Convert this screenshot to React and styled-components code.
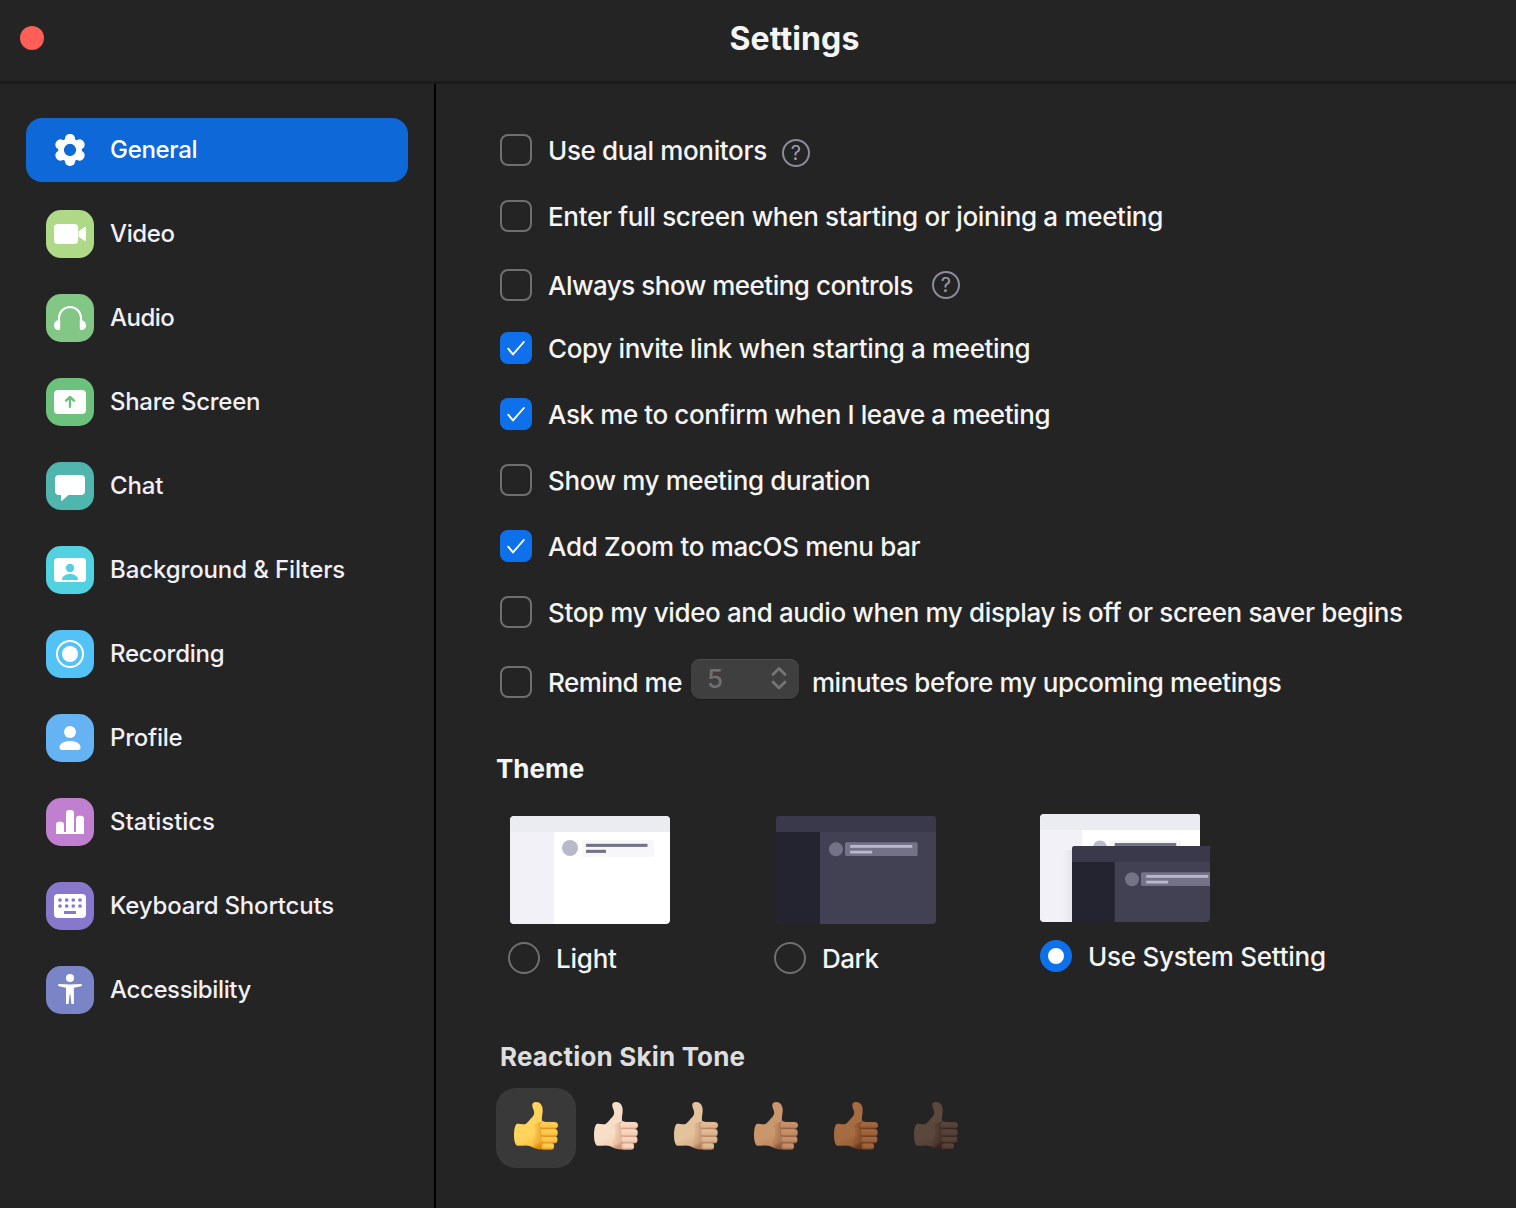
import React from "react";
import styled, { createGlobalStyle } from "styled-components";

const GlobalStyle = createGlobalStyle`
  * { box-sizing: border-box; }
  body {
    margin: 0;
    background: #242424;
    color: #f5f5f5;
    font-family: Inter, "Liberation Sans", sans-serif;
  }
`;

const Window = styled.div`
  display: flex;
  flex-direction: column;
  width: 1516px;
  height: 1208px;
  overflow: hidden;
  background: #242424;
`;

const TitleBar = styled.header`
  display: grid;
  grid-template-columns: 72px 1fr;
  align-items: center;
  flex: none;
  height: 84px;
  padding: 0 0 5px 20px;
  border-bottom: 3px solid #1b1b1b;
`;

const CloseButton = styled.button`
  width: 24px;
  height: 24px;
  padding: 0;
  border: 0;
  border-radius: 50%;
  background: #ff5f57;
`;

const Title = styled.h1`
  margin: 0 0 0 -19px;
  padding: 2px 0 0;
  text-align: center;
  font-size: 32px;
  line-height: 40px;
  font-weight: 700;
  letter-spacing: 0.1px;
`;

const Body = styled.div`
  display: flex;
  flex: 1;
  min-height: 0;
`;

const Sidebar = styled.nav`
  display: flex;
  flex-direction: column;
  gap: 20px;
  width: 436px;
  padding: 34px 26px;
  border-right: 2px solid #000;
`;

const NavItem = styled.a`
  display: flex;
  align-items: center;
  gap: 16px;
  height: 64px;
  padding-left: 20px;
  border-radius: 16px;
  background: ${(p) => (p.$active ? "#0e68d8" : "transparent")};
  color: ${(p) => (p.$active ? "#fff" : "#f2f0f7")};
`;

const NavIcon = styled.svg`
  width: 48px;
  height: 48px;
  border-radius: 15px;
  background: ${(p) => p.$color};
`;

const NavLabel = styled.span`
  font-size: 24px;
  line-height: 30px;
  font-weight: 500;
  white-space: nowrap;
  letter-spacing: ${(p) => p.$track || 0}px;
`;

const Content = styled.main`
  flex: 1;
  padding: 50px 0 0 60px;
`;

const OptionRow = styled.label`
  display: flex;
  align-items: center;
  height: 32px;
  margin: ${(p) => p.$gap || 0}px 0 0 4px;
`;

const Box = styled.span`
  display: flex;
  align-items: center;
  justify-content: center;
  flex: none;
  width: 32px;
  height: 32px;
  margin-right: 16px;
  border: ${(p) => (p.$checked ? "0" : "2px solid #6f6f6f")};
  border-radius: 8px;
  background: ${(p) => (p.$checked ? "#0e71eb" : "transparent")};
`;

const Label = styled.span`
  padding-top: ${(p) => p.$drop ?? 1}px;
  font-size: 26px;
  line-height: 32px;
  font-weight: 500;
  white-space: nowrap;
  letter-spacing: ${(p) => p.$track || 0}px;
`;

const Help = styled.span`
  display: flex;
  align-items: center;
  justify-content: center;
  width: 28px;
  height: 28px;
  margin: ${(p) => p.$drop || 0}px 0 0 ${(p) => p.$space}px;
  border: 2px solid #8d8b9b;
  border-radius: 50%;
  color: #9e9cae;
  font-size: 20px;
  line-height: 24px;
`;

const MinuteSelect = styled.span`
  display: flex;
  align-items: center;
  justify-content: space-between;
  width: 108px;
  height: 40px;
  margin: 0 13px 6px 9px;
  padding: 0 11px 2px 16px;
  border-radius: 9px;
  background: #3f3f3f;
  box-shadow: inset 0 1px 0 #4d4d4d, 0 1px 1px rgba(0, 0, 0, 0.25);
  color: #6f6f6f;
  font-size: 26px;
  font-weight: 500;
`;

const SectionTitle = styled.h2`
  margin: ${(p) => p.$top}px 0 0 ${(p) => p.$left}px;
  font-size: 26px;
  line-height: 32px;
  font-weight: 700;
  color: ${(p) => p.$color};
  letter-spacing: ${(p) => p.$track || 0}px;
`;

const ThemeGrid = styled.div`
  display: grid;
  grid-template-columns: 266px 266px 1fr;
  height: 160px;
  margin: 29px 0 0 12px;
`;

const ThemeOption = styled.label`
  display: flex;
  flex-direction: column;
  gap: 18px;
  padding-top: ${(p) => (p.$raised ? 0 : 2)}px;
`;

const Preview = styled.svg`
  display: block;
  margin-left: ${(p) => p.$inset}px;
  border-radius: 4px;
`;

const RadioRow = styled.span`
  display: flex;
  align-items: center;
  gap: 16px;
  height: 32px;
`;

const Radio = styled.span`
  width: 32px;
  height: 32px;
  border-radius: 50%;
  border: ${(p) => (p.$checked ? "8px solid #0e71eb" : "2px solid #6f6f6f")};
  background: ${(p) => (p.$checked ? "#fff" : "transparent")};
`;

const ToneRow = styled.div`
  display: flex;
  margin-top: 15px;
`;

const Tone = styled.button`
  width: 80px;
  height: 80px;
  padding: 0;
  border: 0;
  border-radius: 20px;
  background: ${(p) => (p.$selected ? "#393939" : "transparent")};
`;

const ThumbSvg = styled.svg`
  display: block;
  width: 80px;
  height: 80px;
`;

const nav = [
  {
    label: "General", color: "transparent", track: -0.3,
    art: (
      <>
        <circle cx="24" cy="24" r="9" fill="none" stroke="#fff" strokeWidth="5.7" />
        {[0, 60, 120, 180, 240, 300].map((a) => (
          <rect key={a} x="18.9" y="8" width="10.2" height="9.6" rx="4.7" fill="#fff" transform={`rotate(${a} 24 24)`} />
        ))}
      </>
    ),
  },
  {
    label: "Video", color: "#aed987", track: -0.36,
    art: (
      <>
        <rect x="8" y="14" width="24.2" height="20" rx="4" />
        <path d="M32.6 21.2 38.5 17.2Q40 16.4 40 18V30Q40 31.6 38.5 30.8L32.6 26.8Z" />
      </>
    ),
  },
  {
    label: "Audio", color: "#82c786", track: -0.5,
    art: (
      <>
        <path d="M13 35V24a11 11 0 0 1 22 0V35" fill="none" stroke="#fff" strokeWidth="2" />
        <path d="M14.2 25.4C10.3 25.8 8 28.3 8 31.2 8 34 9.6 36 12.4 36 13.6 36 14.2 35.4 14.2 34.4ZM33.8 25.4C37.7 25.8 40 28.3 40 31.2 40 34 38.4 36 35.6 36 34.4 36 33.8 35.4 33.8 34.4Z" />
      </>
    ),
  },
  {
    label: "Share Screen", color: "#6cc17c", track: -0.3,
    art: (
      <>
        <rect x="8" y="12" width="32" height="24" rx="4" />
        <path d="M20 22.7 24 19 28 22.7M24 19.4V28.8" fill="none" stroke="#6cc17c" strokeWidth="2.4" strokeLinecap="round" strokeLinejoin="round" />
      </>
    ),
  },
  {
    label: "Chat", color: "#50b5ad", track: -0.16,
    art: <path d="M13 13H35A4 4 0 0 1 39 17V29A4 4 0 0 1 35 33H22.5L16 38.8Q15 39.4 15 38.3V33H13A4 4 0 0 1 9 29V17A4 4 0 0 1 13 13Z" />,
  },
  {
    label: "Background & Filters", color: "#52d1e0", track: -0.11,
    art: (
      <>
        <rect x="8" y="12" width="32" height="24" rx="3.5" />
        <g fill="#52d1e0">
          <circle cx="24" cy="22" r="4.2" />
          <path d="M16 34C16 30.4 19.2 28 24 28S32 30.4 32 34Z" />
        </g>
      </>
    ),
  },
  {
    label: "Recording", color: "#53c2f7", track: -0.27,
    art: (
      <>
        <circle cx="24" cy="24" r="13" fill="none" stroke="#fff" strokeWidth="2" />
        <circle cx="24" cy="24" r="8" />
      </>
    ),
  },
  {
    label: "Profile", color: "#66b3f4", track: -0.23,
    art: (
      <>
        <circle cx="24" cy="18" r="6" />
        <path d="M13.5 33C14 29.2 18 26.9 24 26.9S34 29.2 34.5 33C34.7 34.9 33.6 36 32 36H16C14.4 36 13.3 34.9 13.5 33Z" />
      </>
    ),
  },
  {
    label: "Statistics", color: "#c180cf", track: -0.06,
    art: <path d="M10 36V27A3.200 3.200 0 0 1 13.2 23.8H14.8A3.200 3.200 0 0 1 18 27V34H20V15.2A3.200 3.200 0 0 1 23.2 12H24.8A3.200 3.200 0 0 1 28 15.2V34H30V21A3.200 3.200 0 0 1 33.2 17.8H34.8A3.200 3.200 0 0 1 38 21V36Z" />,
  },
  {
    label: "Keyboard Shortcuts", color: "#8878cc", track: -0.2,
    art: (
      <>
        <rect x="8" y="12" width="32" height="24" rx="4" />
        <g fill="#8878cc">
          {[18, 24].map((y) => [14, 20.7, 27.3, 34].map((x) => <circle key={`${x}-${y}`} cx={x} cy={y} r="1.85" />))}
          <rect x="18" y="29" width="12" height="3" />
        </g>
      </>
    ),
  },
  {
    label: "Accessibility", color: "#7a85c8", track: -0.38,
    art: (
      <>
        <circle cx="24" cy="12" r="4" />
        <path d="M13 18Q24 18.8 35 18Q36 18 36 19T35 20.200L27.9 21.8V38H25.4L24.4 28.5H23.6L22.6 38H20V21.8L13 20.2Q12 20 12 19T13 18Z" />
      </>
    ),
  },
];

const options = [
  { text: "Use dual monitors", track: -0.35, gap: 0, help: { space: 15, drop: 6 } },
  { text: "Enter full screen when starting or joining a meeting", track: -0.32, gap: 34, drop: 2 },
  { text: "Always show meeting controls", track: -0.5, gap: 37, help: { space: 19, drop: 0 } },
  { text: "Copy invite link when starting a meeting", track: -0.35, gap: 31, checked: true, drop: 2 },
  { text: "Ask me to confirm when I leave a meeting", track: -0.4, gap: 34, checked: true, drop: 2 },
  { text: "Show my meeting duration", track: -0.39, gap: 34, drop: 2 },
  { text: "Add Zoom to macOS menu bar", track: -0.33, gap: 34, checked: true, drop: 2 },
  { text: "Stop my video and audio when my display is off or screen saver begins", track: -0.37, gap: 34, drop: 2 },
];

const tones = [
  { base: "#ffd35c", mid: "#fbc244", line: "#d98a12" },
  { base: "#f8dec6", mid: "#f3d0b5", line: "#cf9478" },
  { base: "#e4c29c", mid: "#dab18c", line: "#b07c5a" },
  { base: "#ca976d", mid: "#c08863", line: "#8e583a" },
  { base: "#a66b41", mid: "#9c6038", line: "#66371c" },
  { base: "#5c473d", mid: "#543f37", line: "#33221d" },
];

function Check() {
  return (
    <svg width="32" height="32" viewBox="0 0 32 32" fill="none" stroke="#fff" strokeWidth="1.9" strokeLinecap="round" strokeLinejoin="round">
      <path d="M8.2 16.7 13 22.4 23.8 10" />
    </svg>
  );
}

function LightWindow({ system }) {
  return (
    <g>
      <rect width="160" height="108" rx="3" fill="#fff" />
      <path d="M0 16H160V3A3 3 0 0 0 157 0H3A3 3 0 0 0 0 3Z" fill="#ebecf2" />
      <path d={`M0 16H${system ? 42 : 44}V108H3A3 3 0 0 1 0 105Z`} fill="#f2f1f7" />
      {system ? (
        <>
          <circle cx="60" cy="33.5" r="7" fill="#bab8cb" />
          <rect x="69" y="26.5" width="72" height="14" rx="1" fill="#f5f5f8" />
          <rect x="74.7" y="29" width="61.5" height="3.2" fill="#747287" />
        </>
      ) : (
        <>
          <circle cx="60" cy="32" r="8" fill="#bab8cb" />
          <rect x="72" y="24" width="72" height="17" rx="1" fill="#f7f7fa" />
          <rect x="76" y="27.8" width="61.5" height="3.1" fill="#747287" />
          <rect x="76" y="33.8" width="20" height="3.1" fill="#747287" />
        </>
      )}
    </g>
  );
}

function DarkWindow({ side = 44 }) {
  return (
    <g>
      <rect width="160" height="108" fill="#414153" />
      <rect width="160" height="16" fill="#39394b" />
      <rect y="16" width={side} height="92" fill="#242330" />
      <circle cx="60" cy="33.3" r="7" fill="#747287" />
      <rect x="69" y="26.2" width="72.6" height="13.8" rx="1.5" fill="#747287" />
      <rect x="74.2" y="29" width="62" height="2.8" fill="#bab8cb" />
      <rect x="74.2" y="34.7" width="22" height="2.8" fill="#bab8cb" />
    </g>
  );
}

function Thumb({ id, base, mid, line }) {
  return (
    <ThumbSvg viewBox="0 0 240 240">
      <defs>
        <linearGradient id={`hand-${id}`} x1="0.3" y1="0" x2="0.6" y2="1">
          <stop offset="0" stopColor={base} />
          <stop offset="0.7" stopColor={base} />
          <stop offset="0.9" stopColor={mid} />
          <stop offset="1" stopColor={line} />
        </linearGradient>
        <linearGradient id={`finger-${id}`} x1="0" y1="0" x2="0" y2="1">
          <stop offset="0" stopColor={base} />
          <stop offset="0.7" stopColor={mid} />
          <stop offset="1" stopColor={line} />
        </linearGradient>
        <linearGradient id={`palm-${id}`} x1="0" y1="0" x2="1" y2="0">
          <stop offset="0" stopColor={line} stopOpacity="0" />
          <stop offset="1" stopColor={line} stopOpacity="0.5" />
        </linearGradient>
      </defs>
      <path
        d="M109 53C108 45 114 42 121 42C132 42 139 51 140 64C141 77 136 87 138 98L150 103V184C128 187 112 180 101 174C91 170 76 174 64 173C57 171 54 156 54 141C54 124 57 110 63 107C72 107 82 110 89 108C96 103 102 94 109 87C116 80 115 73 113 66C111 61 109 57 109 53Z"
        fill={`url(#hand-${id})`}
      />
      <path d="M112 112Q124 101 138 101V182Q112 178 106 160Q126 140 112 112Z" fill={`url(#palm-${id})`} />
      <g fill={`url(#finger-${id})`} stroke={line} strokeOpacity="0.4" strokeWidth="1.5">
        <rect x="137" y="164" width="37" height="21" rx="9" />
        <rect x="134" y="144" width="50" height="22" rx="9.5" />
        <rect x="133" y="123" width="52" height="23" rx="10" />
        <path d="M143 102H175C183 102 186 106 186 112S182 123 175 123H143C134 123 131 119 131 112S135 102 143 102Z" />
      </g>
      <path d="M138 100Q129 105 131 118Q136 143 139 165Q141 177 145 181" fill="none" stroke={line} strokeOpacity="0.5" strokeWidth="2" />
    </ThumbSvg>
  );
}

export default function App() {
  return (
    <>
      <GlobalStyle />
      <Window>
        <TitleBar>
          <CloseButton aria-label="Close" />
          <Title>Settings</Title>
        </TitleBar>
        <Body>
          <Sidebar>
            {nav.map((item, i) => (
              <NavItem key={item.label} $active={i === 0}>
                <NavIcon viewBox="0 0 48 48" fill="#fff" $color={item.color}>{item.art}</NavIcon>
                <NavLabel $track={item.track}>{item.label}</NavLabel>
              </NavItem>
            ))}
          </Sidebar>
          <Content>
            {options.map((o) => (
              <OptionRow key={o.text} $gap={o.gap}>
                <Box $checked={o.checked}>{o.checked && <Check />}</Box>
                <Label $track={o.track} $drop={o.drop}>{o.text}</Label>
                {o.help && <Help $space={o.help.space} $drop={o.help.drop}>?</Help>}
              </OptionRow>
            ))}
            <OptionRow $gap={38}>
              <Box />
              <Label $drop={2} $track={-0.5}>Remind me</Label>
              <MinuteSelect>
                5
                <svg width="18" height="24" viewBox="0 0 18 24" fill="none" stroke="#757575" strokeWidth="2.8" strokeLinecap="round" strokeLinejoin="round">
                  <path d="M3 8.5 9 2.5 15 8.5M3 16 9 22 15 16" />
                </svg>
              </MinuteSelect>
              <Label $drop={2} $track={-0.41}>minutes before my upcoming meetings</Label>
            </OptionRow>

            <SectionTitle $top={55} $left={0} $color="#f5f5f5">Theme</SectionTitle>
            <ThemeGrid>
              <ThemeOption>
                <Preview $inset={2} width="160" height="108"><LightWindow /></Preview>
                <RadioRow><Radio /><Label $drop={2} $track={-0.22}>Light</Label></RadioRow>
              </ThemeOption>
              <ThemeOption>
                <Preview $inset={2} width="160" height="108"><DarkWindow /></Preview>
                <RadioRow><Radio /><Label $drop={2} $track={-0.5}>Dark</Label></RadioRow>
              </ThemeOption>
              <ThemeOption $raised>
                <Preview $inset={0} width="170" height="108">
                  <defs>
                    <clipPath id="front"><path d="M3 0H138V76H0V3A3 3 0 0 1 3 0Z" /></clipPath>
                    <linearGradient id="edge"><stop offset="0" stopColor="#000" stopOpacity="0" /><stop offset="1" stopColor="#000" stopOpacity="0.05" /></linearGradient>
                  </defs>
                  <LightWindow system />
                  <rect x="22" y="36" width="10" height="72" fill="url(#edge)" />
                  <g transform="translate(32 32)">
                    <g clipPath="url(#front)"><DarkWindow side={42.6} /></g>
                  </g>
                </Preview>
                <RadioRow><Radio $checked /><Label $drop={2} $track={-0.26}>Use System Setting</Label></RadioRow>
              </ThemeOption>
            </ThemeGrid>

            <SectionTitle $top={67} $left={4} $color="#dedede" $track={0.17}>Reaction Skin Tone</SectionTitle>
            <ToneRow>
              {tones.map((t, i) => (
                <Tone key={t.base} $selected={i === 0}><Thumb id={i} {...t} /></Tone>
              ))}
            </ToneRow>
          </Content>
        </Body>
      </Window>
    </>
  );
}
